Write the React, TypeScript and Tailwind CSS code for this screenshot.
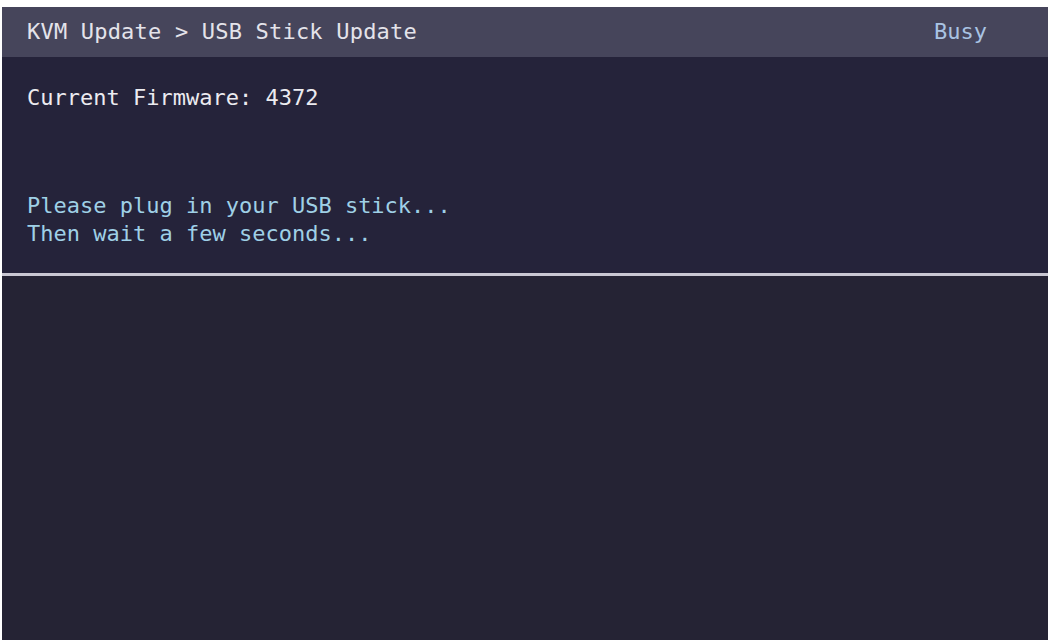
export default function App() {
  const mono = { fontFamily: '"DejaVu Sans Mono", "Liberation Mono", monospace' }

  return (
    <div className="w-[1050px] h-[640px] bg-white pt-[7px] pl-[2px] pr-[2px] overflow-hidden" style={mono}>
      <div className="h-full flex flex-col bg-[#25233a]">
        {/* Title bar */}
        <div className="h-[50px] shrink-0 flex items-center justify-between pl-[25px] pr-[61px] bg-[#46455b]">
          <span className="text-[22px] leading-none text-[#e4e3ea] tracking-[0.2px]">KVM Update &gt; USB Stick Update</span>
          <span className="text-[22px] leading-none text-[#a9c3e3]">Busy</span>
        </div>

        {/* Info area */}
        <div className="h-[216px] shrink-0 flex flex-col pl-[25px] pt-[27px]">
          <p className="text-[22px] leading-[28px] text-[#ecebf0]">Current Firmware: 4372</p>
          <div className="mt-[80px] text-[22px] leading-[28px] text-[#9fd0e6]">
            <p>Please plug in your USB stick...</p>
            <p>Then wait a few seconds...</p>
          </div>
        </div>

        <div className="h-[3px] shrink-0 bg-[#c9c7d2]" />

        {/* Empty lower area */}
        <div className="flex-1 bg-[#252334]" />
      </div>
    </div>
  )
}
